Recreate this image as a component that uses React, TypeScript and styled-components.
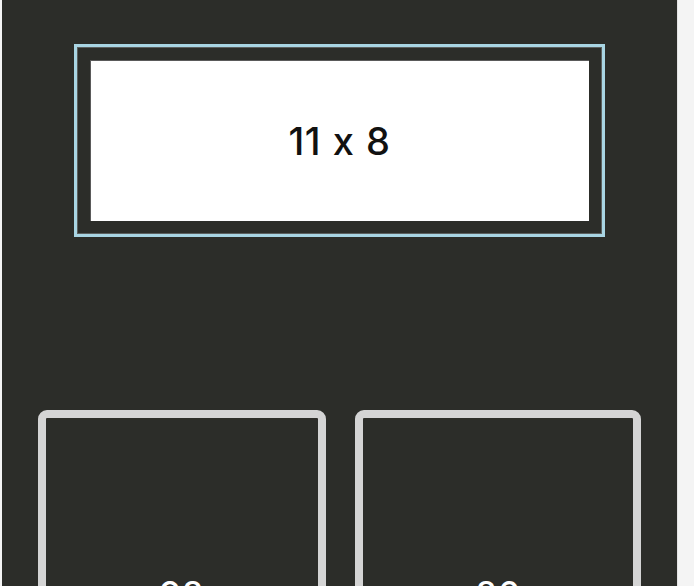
import styled, { createGlobalStyle } from "styled-components";

const GlobalStyle = createGlobalStyle`
  html, body {
    margin: 0;
    padding: 0;
    background: #f4f4f4;
    font-family: Inter, "Noto Sans", sans-serif;
  }
`;

const Panel = styled.div`
  margin-left: 2px;
  width: 676px;
  height: 586px;
  background: #2c2d29;
  overflow: hidden;
  border-right: 1px solid #e4e4e4;
  box-sizing: border-box;
`;

const SizeFrame = styled.div`
  margin: 44px 0 0 72px;
  width: 531px;
  height: 193px;
  box-sizing: border-box;
  border: 3px solid #a9d5e3;
  box-shadow: inset 0 0 0 1px #5c605f;
  padding: 13px;
`;

const SizeLabel = styled.div`
  height: 100%;
  background: #fff;
  box-shadow: inset 1px 1px 0 #5a5a5a;
  display: flex;
  align-items: center;
  justify-content: center;
  color: #111;
  font-size: 38px;
  font-weight: 500;
  letter-spacing: 0.5px;
  word-spacing: 1px;
`;

const Options = styled.div`
  display: grid;
  grid-template-columns: 288px 286px;
  column-gap: 29px;
  padding: 0 36px;
  margin-top: 173px;
`;

const OptionCard = styled.div`
  height: 366px;
  box-sizing: border-box;
  border: 8px solid #d4d4d4;
  border-radius: 9px 9px 0 0;
  display: flex;
  align-items: center;
  justify-content: center;
  color: #fff;
  font-size: 34px;
  font-weight: 500;
  letter-spacing: 1px;
`;

const sizes = ["98", "86"];

export default function App() {
  return (
    <>
      <GlobalStyle />
      <Panel>
        <SizeFrame>
          <SizeLabel>11 x 8</SizeLabel>
        </SizeFrame>
        <Options>
          {sizes.map((s) => (
            <OptionCard key={s}>{s}</OptionCard>
          ))}
        </Options>
      </Panel>
    </>
  );
}
